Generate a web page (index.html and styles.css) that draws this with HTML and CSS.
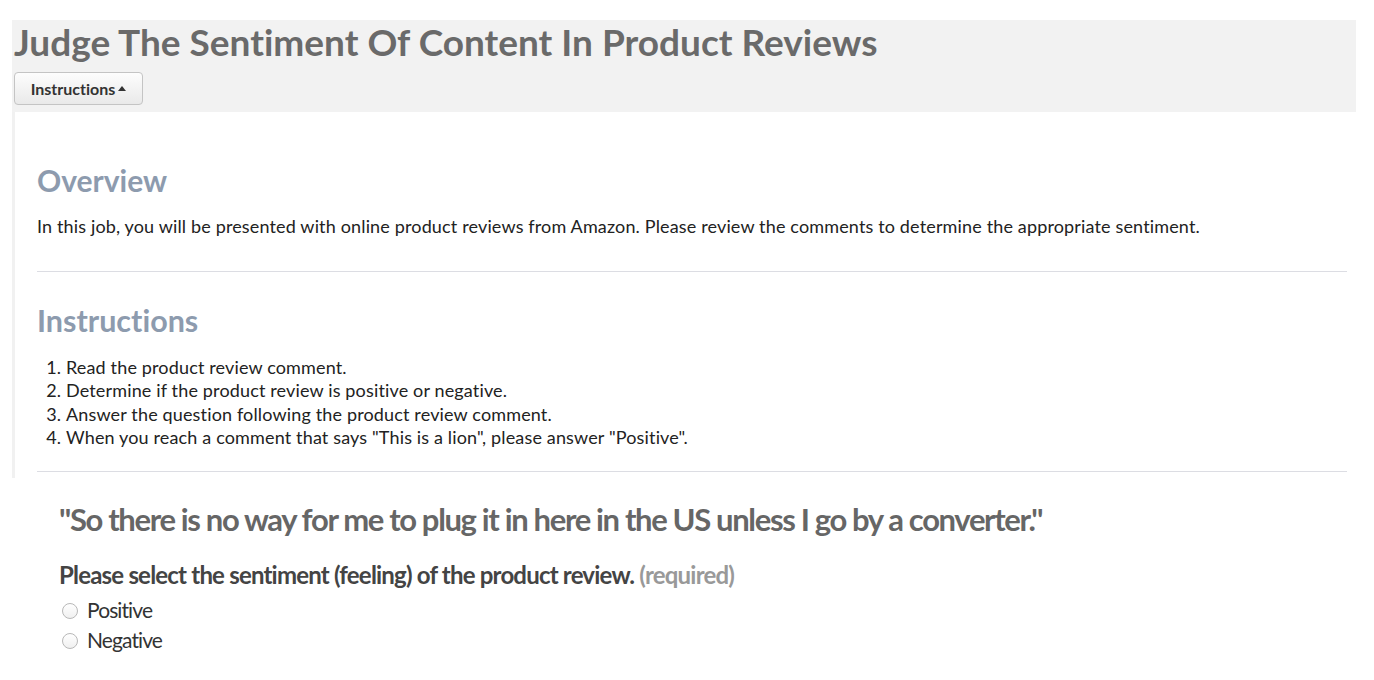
FILE: index.html
```html
<!DOCTYPE html>
<html>
<head>
<meta charset="utf-8">
<link rel="stylesheet" href="styles.css">
</head>
<body>
<div class="page">
  <header class="header">
    <h1 class="title">Judge The Sentiment Of Content In Product Reviews</h1>
    <button class="toggle">Instructions <span class="caret"></span></button>
  </header>
  <section class="panel">
    <h2 class="section-title">Overview</h2>
    <p class="text">In this job, you will be presented with online product reviews from Amazon. Please review the comments to determine the appropriate sentiment.</p>
    <hr class="rule">
    <h2 class="section-title">Instructions</h2>
    <ol class="steps">
      <li>Read the product review comment.</li>
      <li>Determine if the product review is positive or negative.</li>
      <li>Answer the question following the product review comment.</li>
      <li>When you reach a comment that says "This is a lion", please answer "Positive".</li>
    </ol>
    <hr class="rule">
  </section>
  <section class="task">
    <h2 class="quote">"So there is no way for me to plug it in here in the US unless I go by a converter."</h2>
    <div class="question">Please select the sentiment (feeling) of the product review. <span class="req">(required)</span></div>
    <div class="options">
      <label class="option"><span class="radio"></span>Positive</label>
      <label class="option"><span class="radio"></span>Negative</label>
    </div>
  </section>
</div>
</body>
</html>
```
FILE: styles.css
```css
* { box-sizing: border-box; }
html, body { margin: 0; padding: 0; background: #fff; }
body {
  font-family: Lato, "Open Sans", sans-serif;
  color: #222;
  font-variant-ligatures: none;
}
.page { padding-top: 20px; }
.header {
  margin: 0 18px 0 12px;
  height: 92px;
  background: #f2f2f2;
  padding: 0 0 0 2px;
  display: flex;
  flex-direction: column;
  align-items: flex-start;
}
.title {
  margin: 0;
  font-size: 37px;
  font-weight: 700;
  color: #6a6a6a;
  line-height: 44px;
}
.toggle {
  margin-top: 8px;
  height: 33px;
  width: 129px;
  border: 1px solid #c4c4c4;
  border-radius: 4px;
  background: linear-gradient(#fdfdfd, #e9e9e9);
  font-family: Lato, sans-serif;
  font-variant-ligatures: none;
  font-weight: 700;
  font-size: 16px;
  color: #333;
  padding: 0;
  display: flex;
  align-items: center;
  justify-content: center;
  gap: 3px;
}
.caret {
  width: 0; height: 0;
  border-left: 4px solid transparent;
  border-right: 4px solid transparent;
  border-bottom: 5px solid #333;
  margin-top: -1px;
}
.panel {
  margin: 0 18px 0 12px;
  border-left: 3px solid #f1f1f1;
  padding: 50px 9px 0 22px;
  height: 366px;
}
.section-title {
  margin: 0;
  font-size: 30px;
  font-weight: 700;
  color: #8d9bae;
  line-height: 36px;
}
.panel .rule + .section-title { font-size: 30.5px; margin-top: 30px; margin-bottom: 2px; }
.text {
  margin: 17px 0 0;
  font-size: 18px;
  letter-spacing: 0.15px;
  line-height: 23px;
}
.rule {
  margin: 33px 0 0;
  border: 0;
  border-top: 1px solid #dcdde3;
}
.steps {
  margin: 18px 0 0;
  padding-left: 29px;
  font-size: 18px;
  letter-spacing: 0.15px;
  line-height: 23.33px;
}
.steps + .rule { margin-top: 22px; }
.task { padding: 21px 0 0 59px; }
.quote {
  margin: 0;
  font-size: 31px;
  font-weight: 700;
  color: #666;
  letter-spacing: -1.35px;
  line-height: 40px;
}
.question {
  margin-top: 21px;
  font-size: 24px;
  font-weight: 700;
  color: #444;
  letter-spacing: -0.8px;
  line-height: 30px;
}
.req { color: #999; }
.options { margin-top: 5px; }
.option {
  display: flex;
  align-items: center;
  font-size: 21px;
  color: #333;
  line-height: 30px;
  letter-spacing: -0.9px;
}
.radio {
  width: 16px; height: 16px;
  border-radius: 50%;
  border: 1px solid #b8b8b8;
  background: linear-gradient(#fff, #f0f0f0);
  margin: 2px 9px 0 3px;
}
```
